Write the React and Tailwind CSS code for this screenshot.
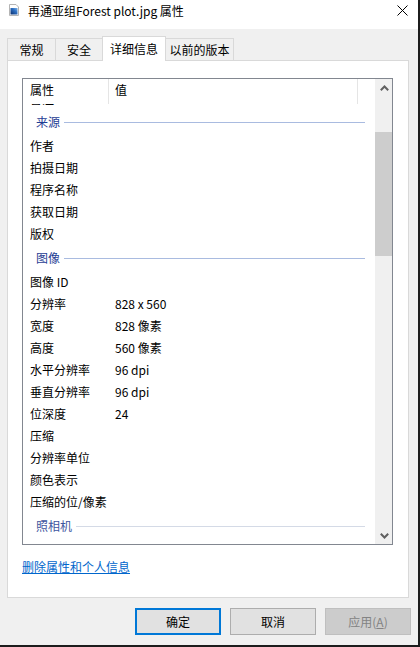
import React from "react";

const F = { fontFamily: '"Noto Sans CJK SC", "Noto Sans", sans-serif' };

function Row({ name, value }) {
  return (
    <div className="flex h-[22px] shrink-0 items-center pl-[7px] text-[12px] text-black">
      <div className="w-[85px] whitespace-nowrap">{name}</div>
      <div className="whitespace-nowrap">{value}</div>
    </div>
  );
}

function Group({ label, faded }) {
  return (
    <div className="flex h-[26px] shrink-0 items-center pl-[13px] pr-[10px]">
      <span className={"whitespace-nowrap text-[12px] " + (faded ? "text-[#3e56a0]" : "text-[#1f3d94]")}>{label}</span>
      <div className={"ml-[4px] h-px flex-1 " + (faded ? "bg-[#d4dae6]" : "bg-[#a9bbe0]")} />
    </div>
  );
}

function Chevron({ up }) {
  return (
    <svg width="9" height="6" viewBox="0 0 9 6">
      {up ? (
        <polyline points="0.8,5.2 4.5,1.5 8.2,5.2" fill="none" stroke="#606060" strokeWidth="2" />
      ) : (
        <polyline points="0.8,0.8 4.5,4.5 8.2,0.8" fill="none" stroke="#606060" strokeWidth="2" />
      )}
    </svg>
  );
}

export default function App() {
  return (
    <div className="h-[647px] w-[420px] bg-[#1c1c1c]" style={F}>
      <div className="flex h-[645px] w-[418px] flex-col bg-[#f0f0f0]">
        {/* title bar */}
        <div className="flex h-[29px] shrink-0 items-start bg-white">
          <svg className="ml-[9px] mt-[4px]" width="10" height="12" viewBox="0 0 10 12">
            <defs>
              <linearGradient id="g" x1="0" y1="1" x2="1" y2="0">
                <stop offset="0" stopColor="#0b2d6b" />
                <stop offset="0.6" stopColor="#2d6fc2" />
                <stop offset="1" stopColor="#7fb4ea" />
              </linearGradient>
            </defs>
            <path d="M0.5 0.5 H7 L9.5 3 V11.5 H0.5 Z" fill="#ffffff" stroke="#b4b4b4" />
            <rect x="1.5" y="4" width="7" height="6.5" fill="url(#g)" />
          </svg>
          <div className="ml-[9px] mt-[3px] whitespace-nowrap text-[12px] leading-[16px] text-black">再通亚组Forest plot.jpg 属性</div>
          <svg className="ml-auto mr-[10px] mt-[5px]" width="11" height="11" viewBox="0 0 11 11">
            <path d="M0.5 0.5 L10.5 10.5 M10.5 0.5 L0.5 10.5" stroke="#000" strokeWidth="1" />
          </svg>
        </div>

        {/* tabs */}
        <div className="ml-[7px] mt-[7px] flex h-[24px] shrink-0 items-end text-[12px] text-black">
          <div className="flex h-[22px] w-[49px] items-start justify-center border border-b-0 border-[#d9d9d9] bg-[#f0f0f0] pt-[3px] leading-[16px]">常规</div>
          <div className="-ml-px flex h-[22px] w-[48px] items-start justify-center border border-b-0 border-[#d9d9d9] bg-[#f0f0f0] pt-[3px] leading-[16px]">安全</div>
          <div className="relative z-10 -mb-px -ml-px flex h-[25px] w-[64px] items-start justify-center border border-b-0 border-[#d9d9d9] bg-white pt-[4px] leading-[16px]">详细信息</div>
          <div className="-ml-px flex h-[22px] w-[69px] items-start justify-center border border-b-0 border-[#d9d9d9] bg-[#f0f0f0] pt-[3px] leading-[16px]">以前的版本</div>
        </div>

        {/* panel */}
        <div className="ml-[7px] flex h-[538px] w-[402px] shrink-0 flex-col border border-[#d9d9d9] bg-white pl-[14px] pt-[17px]">
          <div className="flex h-[467px] w-[371px] border border-[#828790] bg-white">
            <div className="flex min-w-0 flex-1 flex-col">
              {/* header */}
              <div className="flex h-[25px] shrink-0 items-stretch text-[12px] text-black">
                <div className="flex w-[85px] items-center pb-[3px] pl-[7px]">属性</div>
                <div className="w-px bg-[#e5e5e5]" />
                <div className="flex w-[248px] items-center pb-[3px] pl-[6px]">值</div>
                <div className="w-px bg-[#e5e5e5]" />
              </div>
              <div className="flex min-h-0 flex-1 flex-col overflow-hidden">
                <div className="h-[5px] shrink-0 overflow-hidden">
                  <div className="-mt-[16px]">
                    <Row name="备注" value="" />
                  </div>
                </div>
                <Group label="来源" />
                <Row name="作者" value="" />
                <Row name="拍摄日期" value="" />
                <Row name="程序名称" value="" />
                <Row name="获取日期" value="" />
                <Row name="版权" value="" />
                <Group label="图像" />
                <Row name="图像 ID" value="" />
                <Row name="分辨率" value="828 x 560" />
                <Row name="宽度" value="828 像素" />
                <Row name="高度" value="560 像素" />
                <Row name="水平分辨率" value="96 dpi" />
                <Row name="垂直分辨率" value="96 dpi" />
                <Row name="位深度" value="24" />
                <Row name="压缩" value="" />
                <Row name="分辨率单位" value="" />
                <Row name="颜色表示" value="" />
                <Row name="压缩的位/像素" value="" />
                <Group label="照相机" faded />
                <div className="h-[4px] shrink-0" />
              </div>
            </div>
            {/* scrollbar */}
            <div className="flex w-[17px] shrink-0 flex-col bg-[#f0f0f0]">
              <div className="flex h-[17px] items-center justify-center pl-px">
                <Chevron up />
              </div>
              <div className="flex-1">
                <div className="mt-[36px] h-[124px] w-full bg-[#cdcdcd]" />
              </div>
              <div className="flex h-[17px] items-center justify-center pl-px">
                <Chevron />
              </div>
            </div>
          </div>
          <div className="mt-[14px] text-[12px] leading-[16px]">
            <span className="text-[#0066cc] underline">删除属性和个人信息</span>
          </div>
        </div>

        {/* buttons */}
        <div className="mt-[10px] flex justify-end gap-[9px] pr-[7px] text-[12px]">
          <div className="flex h-[27px] w-[86px] items-center justify-center border-2 border-[#0078d7] bg-[#e1e1e1] text-black">确定</div>
          <div className="flex h-[27px] w-[86px] items-center justify-center border border-[#adadad] bg-[#e1e1e1] text-black">取消</div>
          <div className="flex h-[27px] w-[86px] items-center justify-center border border-[#bfbfbf] bg-[#cccccc] text-[#838383]">
            应用(<span className="underline">A</span>)
          </div>
        </div>
      </div>
    </div>
  );
}
